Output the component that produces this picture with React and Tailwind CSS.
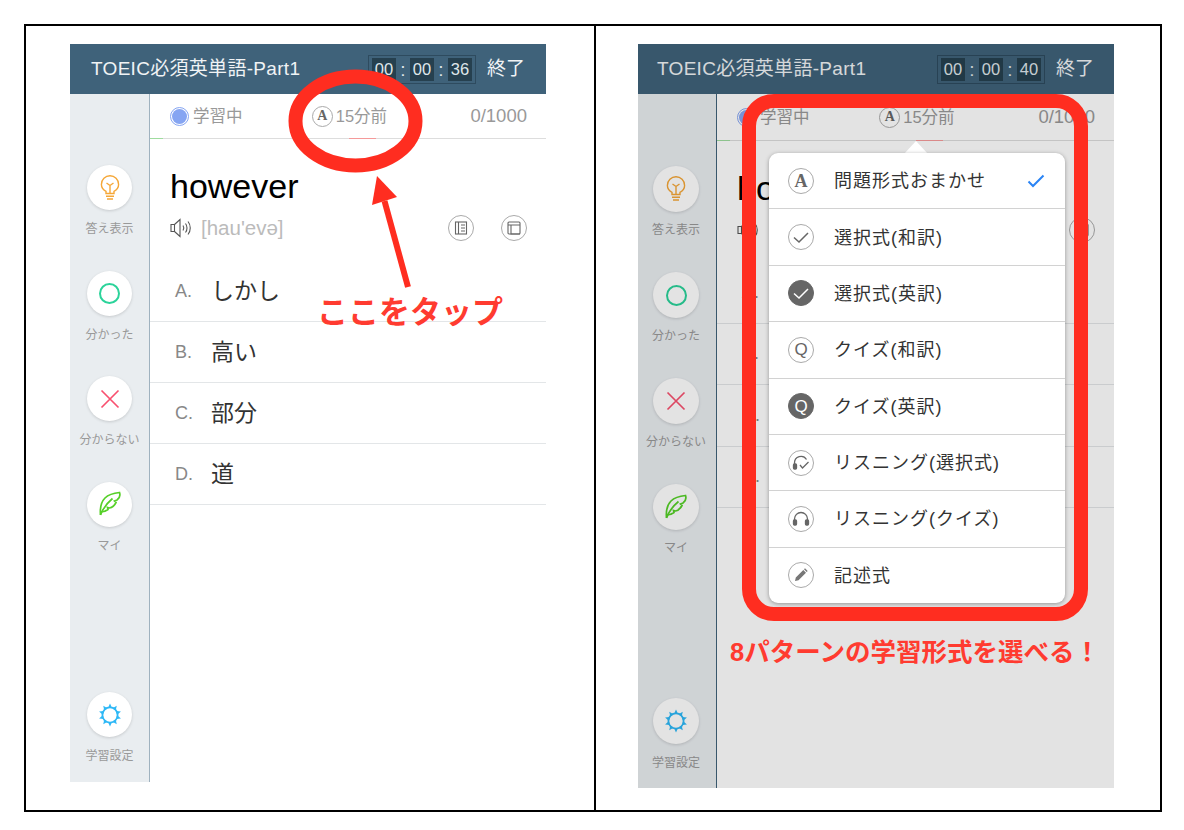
const font = { fontFamily: '"Liberation Sans", "Noto Sans CJK JP", sans-serif' };

const Bulb = () => (
  <svg width="20" height="26" viewBox="0 0 20 26" fill="none" stroke="#f5a738" strokeWidth="1.4">
    <path d="M6 18.500v-2.200C3.400 14.800 1.400 12.400 1.400 9.400a8.600 8.600 0 0 1 17.200 0c0 3-2 5.400-4.600 6.900v2.200z" />
    <path d="M6.500 8 10 10.500 13.500 8M10 10.500v8M6 21.200h8M7 24h6" />
  </svg>
);

const Leaf = () => (
  <svg width="24" height="26" viewBox="0 0 24 26" fill="none" stroke="#56d028" strokeWidth="1.700">
    <path d="M2.500 24c-.6-6.500 .5-13 4.500-17C10.500 3.500 16 2 21.500 1.500c1 3-.5 6-2.500 7.500l-2.500 1 1.500 1.500c-1.500 3-4 5-6.500 5.500l-2-.5.5 2c-2 1.500-4.500 2.500-7 2.500" />
    <path d="M2.500 24C5 17 9 12 14.500 7.500" />
  </svg>
);

const Gear = () => (
  <svg width="24" height="24" viewBox="0 0 24 24" fill="none">
    {[0, 36, 72, 108, 144, 180, 216, 252, 288, 324].map((deg) => (
      <polygon key={deg} points="10,5 12,0.500 14,5" fill="#2eb8f6" transform={`rotate(${deg} 12 12)`} />
    ))}
    <circle cx="12" cy="12" r="7.600" stroke="#2eb8f6" strokeWidth="1.800" />
  </svg>
);

const Speaker = () => (
  <svg width="23" height="20" viewBox="0 0 23 20" fill="none" stroke="#555" strokeWidth="1.100">
    <path d="M1 6.500h3.500V13.500H1zM4.500 6.500 10 1.500v17l-5.500-5" />
    <path d="M13 7.500c1 1.500 1 3.500 0 5M15.500 5.500c2 2.500 2 6.500 0 9M18 3.500c3 3.500 3 9.500 0 13" />
  </svg>
);

const RoundIcon = ({ children, dark, size = 'w-[26px] h-[26px]' }) => (
  <div
    className={`${size} shrink-0 rounded-full flex items-center justify-center border ${
      dark ? 'bg-[#666666] border-[#666666]' : 'bg-white border-[#aaaaaa]'
    }`}
  >
    {children}
  </div>
);

const LetterA = ({ cls = 'text-[15px]' }) => (
  <span className={`${cls} font-bold text-[#666666] leading-none`} style={{ fontFamily: '"Liberation Serif", serif' }}>
    A
  </span>
);

const Tick = ({ color }) => (
  <svg width="18" height="13" viewBox="0 0 18 13" fill="none" stroke={color} strokeWidth="1.500">
    <path d="M2 6.500l5 4.500L16 2" />
  </svg>
);

const Phones = ({ check }) => (
  <svg width="18" height="17" viewBox="0 0 18 17" fill="none" stroke="#666" strokeWidth="1.300">
    {check ? <path d="M2.500 10V9a6.500 6.500 0 0 1 12-3.500" /> : <path d="M2.500 11V9a6.500 6.500 0 0 1 13 0v2" />}
    <rect x="1.500" y="10" width="3" height="5" rx="1" fill="#666" />
    {check ? <path d="M8 11l2.500 3 6-6" /> : <rect x="13.500" y="10" width="3" height="5" rx="1" fill="#666" />}
  </svg>
);

const menuItems = [
  { label: '問題形式おまかせ', icon: <LetterA cls="text-[18px]" />, checked: true },
  { label: '選択式(和訳)', icon: <Tick color="#666" /> },
  { label: '選択式(英訳)', icon: <Tick color="#fff" />, dark: true },
  { label: 'クイズ(和訳)', icon: <span className="text-[17px] leading-none text-[#666666]">Q</span> },
  { label: 'クイズ(英訳)', icon: <span className="text-[17px] leading-none text-white">Q</span>, dark: true },
  { label: 'リスニング(選択式)', icon: <Phones check /> },
  { label: 'リスニング(クイズ)', icon: <Phones /> },
  {
    label: '記述式',
    icon: (
      <svg width="16" height="16" viewBox="0 0 16 16" fill="#777">
        <path d="M2 14l.8-3.500 7.500-7.500 2.700 2.700-7.500 7.500zM11 2.300l1-1 2.700 2.700-1 1z" />
      </svg>
    ),
  },
];

const sideItems = [
  { label: '答え表示', icon: <Bulb /> },
  { label: '分かった', icon: <div className="w-[21px] h-[21px] rounded-full border-2 border-[#2bd39a]" /> },
  {
    label: '分からない',
    icon: (
      <svg width="20" height="20" viewBox="0 0 20 20" stroke="#f8506f" strokeWidth="1.700">
        <path d="M1.500 1.500l17 17M18.500 1.500l-17 17" />
      </svg>
    ),
  },
  { label: 'マイ', icon: <Leaf /> },
];

const SideButton = ({ label, icon, tall }) => (
  <div className={`flex flex-col items-center ${tall ? 'h-[106px]' : 'h-[105.5px]'}`}>
    <div className={`rounded-full bg-white flex items-center justify-center shadow-[0_1px_3px_rgba(0,0,0,0.15)] ${tall ? 'w-[46px] h-[46px]' : 'w-[45px] h-[45px]'}`}>
      {icon}
    </div>
    <span className={`text-[12px] leading-[16px] text-[#999999] whitespace-nowrap ${tall ? 'mt-[10px]' : 'mt-[11px]'}`}>{label}</span>
  </div>
);

const Timer = ({ secs }) => (
  <div className="flex items-center h-[29px] w-[108px] border border-[#2e4b5f] px-[3px] justify-between text-[16.500px] text-[#dfe6ea]">
    {['00', '00', secs].map((v, i) => (
      <div key={i} className="contents">
        {i > 0 && <span className="text-[19px] leading-none">:</span>}
        <span className="w-[24px] h-[23px] bg-[#26404f] flex items-center justify-center leading-none">{v}</span>
      </div>
    ))}
  </div>
);

// tall = the right hand screen, its words sit behind the menu so only what shows is written
const Screen = ({ tall, secs }) => (
  <div className={`w-[476px] flex flex-col ${tall ? 'h-[744px]' : 'h-[738px]'}`}>
    {/* header */}
    <div className={`h-[50px] shrink-0 bg-[#3f627a] flex items-center justify-between text-white ${tall ? 'pl-[19px] pr-[20px]' : 'pl-[21px] pr-[21px]'}`}>
      <span className="text-[19px] tracking-[0.300px] text-[#f0f3f5]">TOEIC必須英単語-Part1</span>
      <div className="flex items-center gap-[11px]">
        <Timer secs={secs} />
        <span className="text-[19px] text-[#f0f3f5]">終了</span>
      </div>
    </div>

    <div className="flex flex-1 min-h-0">
      {/* sidebar */}
      <div className={`shrink-0 bg-[#e9edf0] border-r flex flex-col ${tall ? 'w-[79px] pr-[2px] pt-[72px] pb-[17px] border-[#3f627a]' : 'w-[80px] pt-[71px] pb-[18px] border-[#9fb2bf]'}`}>
        {sideItems.map((s) => (
          <SideButton key={s.label} {...s} tall={tall} />
        ))}
        <div className="mt-auto">
          <div className="flex flex-col items-center">
            <div className={`rounded-full bg-white flex items-center justify-center shadow-[0_1px_3px_rgba(0,0,0,0.15)] ${tall ? 'w-[46px] h-[46px]' : 'w-[45px] h-[45px]'}`}>
              <Gear />
            </div>
            <span className="mt-[11px] text-[12px] leading-[16px] text-[#999999]">学習設定</span>
          </div>
        </div>
      </div>

      {/* content */}
      <div className="flex-1 bg-white min-w-0">
        <div className={`relative flex items-center justify-between pl-[20px] pr-[19px] border-b border-[#dddddd] text-[#999999] ${tall ? 'h-[47px]' : 'h-[45px]'}`}>
          <div className="flex items-center gap-[4px] text-[16.500px]">
            <div className="w-[19px] h-[19px] rounded-full border border-[#86a5f2] flex items-center justify-center">
              <div className="w-[15px] h-[15px] rounded-full bg-[#86a5f2]" />
            </div>
            学習中
          </div>
          <div className="flex items-center gap-[3px] text-[16.500px] mr-[14px]">
            <RoundIcon size="w-[21px] h-[21px]">
              <LetterA cls="text-[14px]" />
            </RoundIcon>
            15分前
          </div>
          <span className="text-[18.500px]">0/1000</span>
          <div className="absolute left-0 bottom-[-1px] w-[13px] h-px bg-[#9fdc9f]" />
          <div className="absolute left-[199px] bottom-[-1px] w-[27px] h-px bg-[#f59a9a]" />
        </div>

        <div className="pl-[20px] pr-[19px] pt-[24px]">
          <div className="text-[34px] leading-[46px] text-black">{tall ? 'ho' : 'however'}</div>
          <div className="flex items-center justify-between mt-[6px] h-[26px]">
            <div className="flex items-center gap-[8px] text-[20.500px] text-[#bbbbbb]">
              <Speaker />
              {!tall && "[hau'evə]"}
            </div>
            <div className="flex gap-[27px]">
              <RoundIcon>
                <svg width="14" height="14" viewBox="0 0 14 14" fill="none" stroke="#666" strokeWidth="1.100">
                  <rect x="1.500" y="1" width="11" height="12" />
                  <path d="M4.500 1v12M7 4h4M7 7h4M7 10h4" />
                </svg>
              </RoundIcon>
              <RoundIcon>
                <svg width="14" height="14" viewBox="0 0 14 14" fill="none" stroke="#666" strokeWidth="1.100">
                  <rect x="1" y="1" width="12" height="12" rx="1" />
                  <path d="M1 4h12M4 4v9h9" />
                </svg>
              </RoundIcon>
            </div>
          </div>
        </div>

        <div className={tall ? 'mt-[19px]' : 'mt-[20px]'}>
          {[
            ['A.', 'しかし'],
            ['B.', '高い'],
            ['C.', '部分'],
            ['D.', '道'],
          ].map(([k, v]) => (
            <div key={k} className={`flex items-center border-b border-[#e3e6e8] pl-[25px] ${tall ? 'h-[61.500px]' : 'h-[61px]'}`}>
              <span className="w-[36px] text-[18px] text-[#888888]">{k}</span>
              {!tall && <span className="text-[23px] text-[#333333]">{v}</span>}
            </div>
          ))}
        </div>
      </div>
    </div>
  </div>
);

export default function App() {
  return (
    <div className="w-[1184px] h-[830px] bg-white pt-[24px] pl-[24px]" style={font}>
      <div className="w-[1138px] h-[788px] border-2 border-black flex">
        {/* left: tap here */}
        <div className="w-[570px] shrink-0 border-r-2 border-black pl-[44px] pt-[18px]">
          <div className="relative w-[476px]">
            <Screen secs="36" />
            <svg className="absolute left-[210px] top-[20px]" width="170" height="230" viewBox="0 0 170 230" fill="none">
              <ellipse cx="75.500" cy="57" rx="60" ry="44.500" stroke="#ff2d20" strokeWidth="14" />
              <path d="M128 223 104.500 137" stroke="#ff2d20" strokeWidth="6" />
              <polygon points="97,112 92,141 117,133" fill="#ff2d20" />
            </svg>
            <div className="absolute left-[247px] top-[254px] text-[31px] leading-[30px] font-bold text-[#ff3b30] whitespace-nowrap">
              ここをタップ
            </div>
          </div>
        </div>

        {/* right: format menu */}
        <div className="flex-1 pl-[42px] pt-[18px]">
          <div className="relative w-[476px]">
            <Screen tall secs="40" />
            <div className="absolute inset-0 bg-black/[0.11]" />
            <svg className="absolute left-[266px] top-[96px]" width="24" height="14" viewBox="0 0 24 14">
              <polygon points="12,1 0,14 24,14" fill="#ffffff" />
            </svg>
            <div className="absolute left-[131px] top-[109px] w-[296px] h-[450px] bg-white rounded-[9px] shadow-[0_1px_4px_rgba(0,0,0,0.35)] flex flex-col">
              {menuItems.map((m, i) => (
                <div
                  key={m.label}
                  className={`flex-1 flex items-center pl-[19px] pr-[20px] gap-[20px] ${i < 7 ? 'border-b border-[#d2d2d2]' : ''}`}
                >
                  <RoundIcon dark={m.dark}>{m.icon}</RoundIcon>
                  <span className="flex-1 pt-[2px] text-[18px] tracking-[1px] text-[#333333]">{m.label}</span>
                  {m.checked && (
                    <svg width="18" height="14" viewBox="0 0 18 14" fill="none" stroke="#2a84f5" strokeWidth="2">
                      <path d="M1.500 7.500l4.500 4.500L16.500 1.500" />
                    </svg>
                  )}
                </div>
              ))}
            </div>
            <div className="absolute left-[104px] top-[50px] w-[346px] h-[527px] border-[14px] border-[#ff2d20] rounded-[32px]" />
            <div className="absolute left-[92px] top-[593px] text-[25.500px] leading-[30px] font-bold text-[#ff3b30] whitespace-nowrap">
              8パターンの学習形式を選べる！
            </div>
          </div>
        </div>
      </div>
    </div>
  );
}
